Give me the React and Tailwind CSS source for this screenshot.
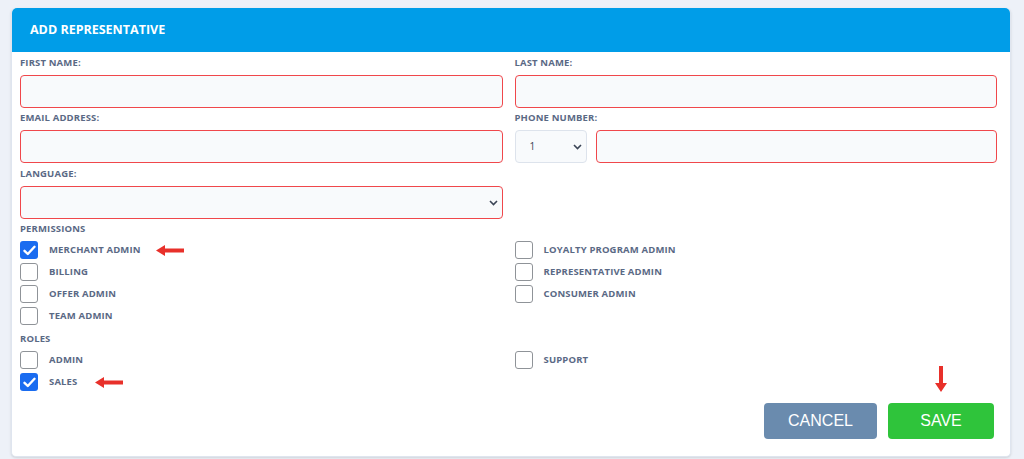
import { useState } from 'react';

const LABEL = 'text-[9.5px] font-bold uppercase tracking-[0.15px] text-[#5a6985] leading-[12px]';
const FONT = { fontFamily: '"Open Sans", "Liberation Sans", sans-serif' };
const BTN_FONT = { fontFamily: '"Liberation Sans", Arial, sans-serif' };

function Chevron() {
    return (
        <svg width="9" height="6" viewBox="0 0 9 6" className="shrink-0">
            <path d="M1 1 L4.5 4.5 L8 1" fill="none" stroke="#3b4556" strokeWidth="1.6" />
        </svg>
    );
}

function Field({ label, top = 'mt-[4px]', children }) {
    return (
        <div className="flex flex-col">
            <div className={`${LABEL} ${top} mb-[6px]`}>{label}</div>
            {children}
        </div>
    );
}

function TextBox() {
    return <div className="h-[33px] rounded-[4px] border border-[#f0474b] bg-[#f8fafc]" />;
}

function Checkbox({ checked, label, onToggle }) {
    return (
        <div className="flex h-[22px] items-start" onClick={onToggle}>
            {checked ? (
                <div className="flex h-[18px] w-[18px] items-center justify-center rounded-[3px] bg-[#1a6cf0]">
                    <svg width="13" height="11" viewBox="0 0 13 11">
                        <path d="M1.5 5.8 L4.8 9 L11.5 1.8" fill="none" stroke="#fff" strokeWidth="2.4" strokeLinecap="round" strokeLinejoin="round" />
                    </svg>
                </div>
            ) : (
                <div className="h-[18px] w-[18px] rounded-[3px] border-[1.5px] border-[#8f9398] bg-white" />
            )}
            <span className={`${LABEL} ml-[11px] mt-[3px]`}>{label}</span>
        </div>
    );
}

function ArrowLeft({ className }) {
    return (
        <svg width="28" height="11" viewBox="0 0 28 11" className={className}>
            <path d="M0 5.5 L9 0 L9 3.6 L28 3.6 L28 7.4 L9 7.4 L9 11 Z" fill="#e8302a" />
        </svg>
    );
}

function ArrowDown() {
    return (
        <svg width="12" height="26" viewBox="0 0 12 26">
            <path d="M6 26 L0 17 L4 17 L4 0 L8 0 L8 17 L12 17 Z" fill="#e8302a" />
        </svg>
    );
}

export default function App() {
    const [perms, setPerms] = useState({ merchant: true });
    const [roles, setRoles] = useState({ sales: true });
    const togglePerm = (k) => setPerms({ ...perms, [k]: !perms[k] });
    const toggleRole = (k) => setRoles({ ...roles, [k]: !roles[k] });

    return (
        <div className="h-[459px] w-[1024px] overflow-hidden bg-[#edf1f8] pt-[8px] pl-[11px]" style={FONT}>
            <div className="w-[1000px] rounded-[5px] border-x border-b border-[#dfe5ef] bg-white pb-[17px] shadow-sm">
                <div className="flex h-[44px] items-center rounded-t-[5px] bg-[#009de8] px-[18px]">
                    <span className="text-[12.5px] font-bold uppercase text-white">Add Representative</span>
                </div>

                <div className="pl-[8px] pr-[13px]">
                    <div className="grid grid-cols-2 gap-x-[12px]">
                        <Field label="First Name:" top="mt-[5px]"><TextBox /></Field>
                        <Field label="Last Name:" top="mt-[5px]"><TextBox /></Field>
                        <Field label="Email Address:"><TextBox /></Field>
                        <Field label="Phone Number:">
                            <div className="flex gap-[9px]">
                                <div className="flex h-[33px] w-[72px] items-center justify-between rounded-[4px] border border-[#dde3ec] bg-[#f8fafc] pl-[14px] pr-[4px]">
                                    <span className="text-[10px] text-[#3b4556]">1</span>
                                    <Chevron />
                                </div>
                                <div className="flex-1"><TextBox /></div>
                            </div>
                        </Field>
                        <Field label="Language:" top="mt-[5px]">
                            <div className="flex h-[33px] items-center justify-end rounded-[4px] border border-[#f0474b] bg-[#f8fafc] pr-[4px]">
                                <Chevron />
                            </div>
                        </Field>
                        <div />
                    </div>

                    <div className={`${LABEL} mt-[4px] mb-[6px]`}>Permissions</div>
                    <div className="grid grid-cols-2 gap-x-[12px]">
                        <div className="flex flex-col">
                            <div className="flex items-start">
                                <Checkbox checked={perms.merchant} label="Merchant Admin" onToggle={() => togglePerm('merchant')} />
                                <ArrowLeft className="ml-[15px] mt-[4px]" />
                            </div>
                            <Checkbox checked={perms.billing} label="Billing" onToggle={() => togglePerm('billing')} />
                            <Checkbox checked={perms.offer} label="Offer Admin" onToggle={() => togglePerm('offer')} />
                            <Checkbox checked={perms.team} label="Team Admin" onToggle={() => togglePerm('team')} />
                        </div>
                        <div className="flex flex-col">
                            <Checkbox checked={perms.loyalty} label="Loyalty Program Admin" onToggle={() => togglePerm('loyalty')} />
                            <Checkbox checked={perms.rep} label="Representative Admin" onToggle={() => togglePerm('rep')} />
                            <Checkbox checked={perms.consumer} label="Consumer Admin" onToggle={() => togglePerm('consumer')} />
                        </div>
                    </div>

                    <div className={`${LABEL} mt-[4px] mb-[6px]`}>Roles</div>
                    <div className="grid grid-cols-2 gap-x-[12px]">
                        <div className="flex flex-col">
                            <Checkbox checked={roles.admin} label="Admin" onToggle={() => toggleRole('admin')} />
                            <div className="flex items-start">
                                <Checkbox checked={roles.sales} label="Sales" onToggle={() => toggleRole('sales')} />
                                <ArrowLeft className="ml-[18px] mt-[4px]" />
                            </div>
                        </div>
                        <div className="flex flex-col">
                            <Checkbox checked={roles.support} label="Support" onToggle={() => toggleRole('support')} />
                        </div>
                    </div>

                    <div className="-mt-[29px] flex justify-end gap-[11px] pr-[3px]">
                        <div className="flex flex-col items-center justify-end">
                            <button className="h-[36px] w-[113px] rounded-[4px] bg-[#6a8bae] text-[16px] text-white" style={BTN_FONT}>
                                CANCEL
                            </button>
                        </div>
                        <div className="flex flex-col items-center">
                            <ArrowDown />
                            <button className="mt-[11px] h-[36px] w-[106px] rounded-[4px] bg-[#2fc43b] text-[16px] text-white" style={BTN_FONT}>
                                SAVE
                            </button>
                        </div>
                    </div>
                </div>
            </div>
        </div>
    );
}
